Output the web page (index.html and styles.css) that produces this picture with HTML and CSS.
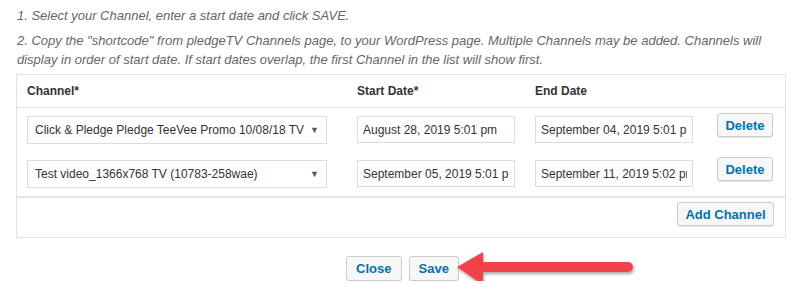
FILE: index.html
```html
<!DOCTYPE html>
<html lang="en">
<head>
  <meta charset="UTF-8" />
  <title>pledgeTV Channels</title>
  <link rel="stylesheet" href="styles.css">
</head>
<body>
  <div class="page">
    <p class="note">1. Select your Channel, enter a start date and click SAVE.</p>
    <p class="note">2. Copy the "shortcode" from pledgeTV Channels page, to your WordPress page. Multiple Channels may be added. Channels will display in order of start date. If start dates overlap, the first Channel in the list will show first.</p>

    <div class="channels">
      <div class="row head">
        <div class="cell">Channel*</div>
        <div class="cell">Start Date*</div>
        <div class="cell">End Date</div>
        <div class="cell"></div>
      </div>

      <div class="row item">
        <div class="cell">
          <div class="select"><span>Click &amp; Pledge Pledge TeeVee Promo 10/08/18 TV</span><span class="caret">&#9660;</span></div>
        </div>
        <div class="cell"><input class="date" type="text" value="August 28, 2019 5:01 pm"></div>
        <div class="cell"><input class="date" type="text" value="September 04, 2019 5:01 pm"></div>
        <div class="cell"><button class="btn">Delete</button></div>
      </div>

      <div class="row item last">
        <div class="cell">
          <div class="select"><span>Test video_1366x768 TV (10783-258wae)</span><span class="caret">&#9660;</span></div>
        </div>
        <div class="cell"><input class="date" type="text" value="September 05, 2019 5:01 pm"></div>
        <div class="cell"><input class="date" type="text" value="September 11, 2019 5:02 pm"></div>
        <div class="cell"><button class="btn">Delete</button></div>
      </div>

      <div class="foot">
        <button class="btn">Add Channel</button>
      </div>
    </div>

    <div class="actions">
      <button class="btn">Close</button>
      <button class="btn">Save</button>
      <!-- annotation arrow pointing at Save -->
      <svg class="arrow" width="190" height="46" viewBox="0 0 190 46">
        <defs>
          <filter id="shadow" x="-10%" y="-30%" width="120%" height="170%">
            <feDropShadow dx="1" dy="2" stdDeviation="1.5" flood-color="#000" flood-opacity="0.35"/>
          </filter>
        </defs>
        <g filter="url(#shadow)" fill="#f2434a">
          <polygon points="5,20 31,5 31,38"/>
          <rect x="27" y="15" width="154" height="10" rx="5"/>
        </g>
      </svg>
    </div>
  </div>
</body>
</html>
```

FILE: styles.css
```css
body {
  margin: 0;
  background: #fff;
  font-family: "Liberation Sans", Arial, sans-serif;
  font-size: 13px;
  color: #333;
}
.page {
  padding: 6px 19px 0 16px;
}
.note {
  margin: 0 0 5px 1px;
  max-width: 752px;
  font-style: italic;
  color: #666;
  line-height: 19px;
}
.page .note:first-child {
  margin-bottom: 6px;
}
.channels {
  margin-top: 3px;
  border: 1px solid #e1e1e1;
  width: 768px;
}
.row {
  display: grid;
  grid-template-columns: 330px 178px 180px 1fr;
}
.cell {
  padding-left: 10px;
}
.row.head {
  height: 32px;
  align-items: center;
  font-size: 12px;
  font-weight: bold;
  border-bottom: 1px solid #e1e1e1;
}
.row.item {
  height: 44px;
  padding-top: 8px;
  box-sizing: border-box;
}
.row.item.last {
  border-bottom: 2px solid #e4e4e4;
  height: 46px;
}
.select {
  box-sizing: border-box;
  width: 300px;
  height: 28px;
  border: 1px solid #dcdcdc;
  background: #fff;
  display: flex;
  align-items: center;
  justify-content: space-between;
  padding: 0 7px 0 7px;
  font-size: 12px;
  white-space: nowrap;
  color: #333;
}
.caret {
  font-size: 9px;
  color: #555;
}
.date {
  box-sizing: border-box;
  width: 158px;
  height: 27px;
  border: 1px solid #dcdcdc;
  padding: 0 5px;
  font-family: inherit;
  font-size: 12px;
  color: #333;
}
.row.item .cell:last-child {
  padding-left: 12px;
  margin-top: -3px;
}
.btn {
  font-family: inherit;
  font-size: 13px;
  font-weight: bold;
  color: #0073aa;
  background: #f7f7f7;
  border: 1px solid #cccccc;
  border-radius: 3px;
  height: 24px;
  padding: 0 8px;
  box-shadow: 0 1px 0 #e6e6e6;
  cursor: pointer;
}
.row.item .btn {
  display: block;
  width: 56px;
  padding: 0;
}
.foot {
  display: flex;
  justify-content: flex-end;
  padding: 4px 11px 11px 0;
}
.foot .btn {
  width: 97px;
  padding: 0;
}
.actions {
  position: relative;
  display: flex;
  justify-content: center;
  gap: 7px;
  margin-top: 18px;
  padding-left: 3px;
}
.actions .btn {
  height: 25px;
  padding: 0 9px;
}
.arrow {
  position: absolute;
  left: 436px;
  top: -9px;
}
```
